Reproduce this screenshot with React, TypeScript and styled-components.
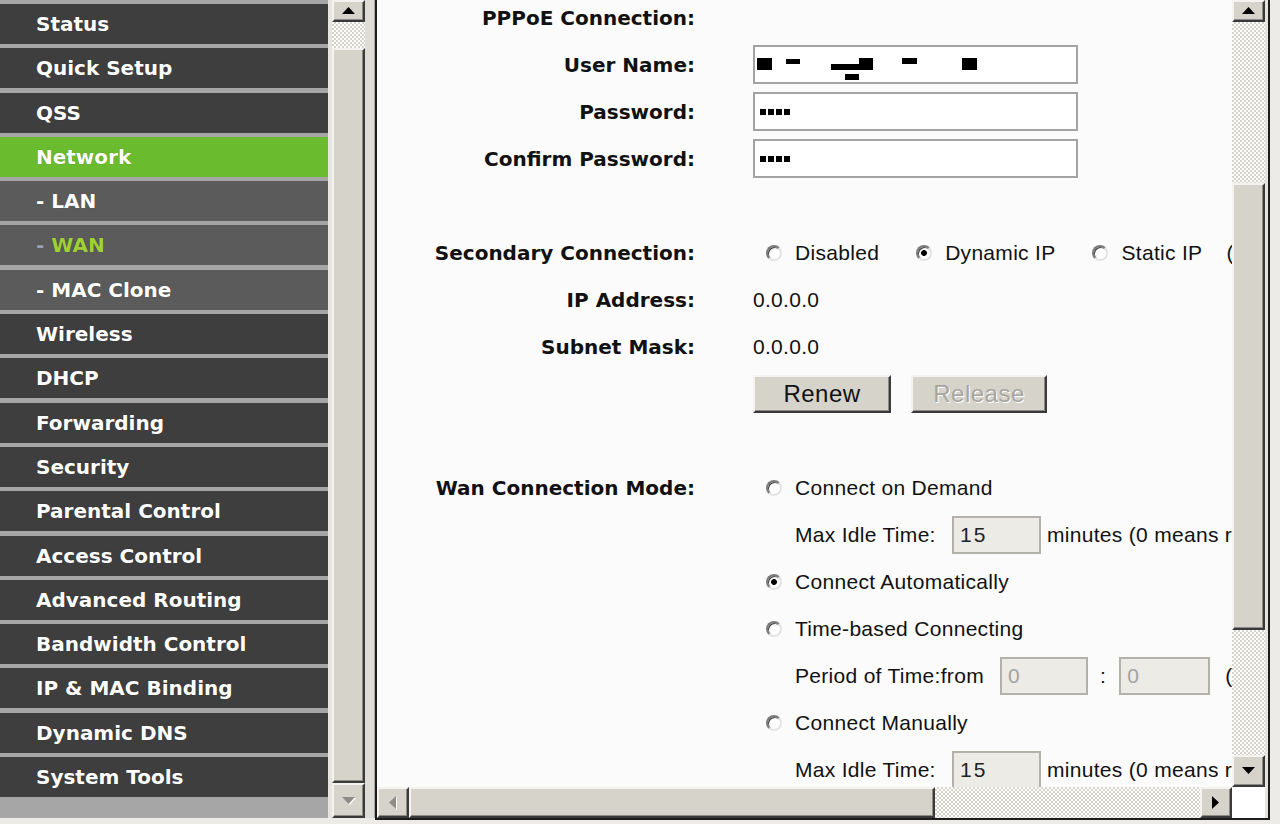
import styled, { createGlobalStyle, css } from 'styled-components';

type MenuKind = 'top' | 'active' | 'sub';

interface IMenuItem {
  label: string;
  kind?: MenuKind;
  current?: boolean;
}

const MENU: IMenuItem[] = [
  { label: 'Status' },
  { label: 'Quick Setup' },
  { label: 'QSS' },
  { label: 'Network', kind: 'active' },
  { label: 'LAN', kind: 'sub' },
  { label: 'WAN', kind: 'sub', current: true },
  { label: 'MAC Clone', kind: 'sub' },
  { label: 'Wireless' },
  { label: 'DHCP' },
  { label: 'Forwarding' },
  { label: 'Security' },
  { label: 'Parental Control' },
  { label: 'Access Control' },
  { label: 'Advanced Routing' },
  { label: 'Bandwidth Control' },
  { label: 'IP & MAC Binding' },
  { label: 'Dynamic DNS' },
  { label: 'System Tools' },
];

// masked characters of the stored user name
const MASK = [
  [2, 11, 15, 12],
  [31, 12, 14, 5],
  [76, 17, 42, 6],
  [104, 11, 14, 12],
  [90, 27, 14, 6],
  [147, 11, 15, 6],
  [207, 11, 15, 12],
];

type Dir = 'up' | 'down' | 'left' | 'right';

function Arrow({ dir, dim }: { dir: Dir; dim?: boolean }) {
  const vertical = dir === 'up' || dir === 'down';
  const points = {
    up: '0,7 6.5,0 13,7',
    down: '0,0 13,0 6.5,7',
    left: '7,0 7,13 0,6.5',
    right: '0,0 0,13 7,6.5',
  }[dir];
  const w = vertical ? 13 : 7;
  const h = vertical ? 7 : 13;
  return (
    <svg width={w + 1} height={h + 1} viewBox={`0 0 ${w + 1} ${h + 1}`}>
      {dim && <polygon points={points} fill="#ffffff" transform="translate(1 1)" />}
      <polygon points={points} fill={dim ? '#8e8c86' : '#000000'} />
    </svg>
  );
}

function Radio({ checked }: { checked?: boolean }) {
  return <RadioDot $checked={checked} />;
}

function Masked() {
  return (
    <>
      <Dot />
      <Dot />
      <Dot />
      <Dot />
    </>
  );
}

export default function App() {
  return (
    <>
      <GlobalStyle />
      <Screen>
        <LeftFrame>
          <Menu>
            {MENU.map((item) => (
              <MenuItem
                key={item.label}
                $kind={item.kind ?? 'top'}
                $current={item.current}
              >
                {item.kind === 'sub' && <Dash $current={item.current}>-&nbsp;</Dash>}
                {item.label}
              </MenuItem>
            ))}
          </Menu>
          <VScroll>
            <ScrollButton $h={22}>
              <Arrow dir="up" />
            </ScrollButton>
            <Track $size={26} />
            <Thumb $size={735} />
            <ScrollButton $h={35}>
              <Arrow dir="down" dim />
            </ScrollButton>
          </VScroll>
        </LeftFrame>
        <FrameGap />
        <MainFrame>
          <Content>
            <Form>
              <Row>
                <Label>PPPoE Connection:</Label>
                <Value />
              </Row>
              <Row>
                <Label>User Name:</Label>
                <Value>
                  <Field>
                    <svg width="321" height="35" viewBox="0 0 321 35">
                      {MASK.map(([x, y, w, h]) => (
                        <rect key={`${x}-${y}`} x={x} y={y} width={w} height={h} fill="#000" />
                      ))}
                    </svg>
                  </Field>
                </Value>
              </Row>
              <Row>
                <Label>Password:</Label>
                <Value>
                  <Field $dots>
                    <Masked />
                  </Field>
                </Value>
              </Row>
              <Row>
                <Label>Confirm Password:</Label>
                <Value>
                  <Field $dots>
                    <Masked />
                  </Field>
                </Value>
              </Row>
              <Row />
              <Row>
                <Label>Secondary Connection:</Label>
                <Value>
                  <Option>
                    <Radio />
                    Disabled
                  </Option>
                  <Option>
                    <Radio checked />
                    Dynamic IP
                  </Option>
                  <Option>
                    <Radio />
                    Static IP
                  </Option>
                  <Note>(For Dual Access/Russia PPPoE)</Note>
                </Value>
              </Row>
              <Row>
                <Label>IP Address:</Label>
                <Value>0.0.0.0</Value>
              </Row>
              <Row>
                <Label>Subnet Mask:</Label>
                <Value>0.0.0.0</Value>
              </Row>
              <Row>
                <Label />
                <Value>
                  <Button type="button">Renew</Button>
                  <Button type="button" disabled>
                    Release
                  </Button>
                </Value>
              </Row>
              <Row />
              <Row>
                <Label>Wan Connection Mode:</Label>
                <Value>
                  <Option>
                    <Radio />
                    Connect on Demand
                  </Option>
                </Value>
              </Row>
              <Row>
                <Label />
                <Value $indent>
                  <SubLabel>Max Idle Time:</SubLabel>
                  <TextBox defaultValue="15" disabled $w={89} />
                  <Unit>minutes (0 means remain active at all times.)</Unit>
                </Value>
              </Row>
              <Row>
                <Label />
                <Value>
                  <Option>
                    <Radio checked />
                    Connect Automatically
                  </Option>
                </Value>
              </Row>
              <Row>
                <Label />
                <Value>
                  <Option>
                    <Radio />
                    Time-based Connecting
                  </Option>
                </Value>
              </Row>
              <Row>
                <Label />
                <Value $indent>
                  <SubLabel $w={205}>Period of Time:from</SubLabel>
                  <TextBox defaultValue="0" disabled $w={88} $dim />
                  <Colon>:</Colon>
                  <TextBox defaultValue="0" disabled $w={91} $dim />
                  <Note>(HH:MM) to</Note>
                </Value>
              </Row>
              <Row>
                <Label />
                <Value>
                  <Option>
                    <Radio />
                    Connect Manually
                  </Option>
                </Value>
              </Row>
              <Row>
                <Label />
                <Value $indent>
                  <SubLabel>Max Idle Time:</SubLabel>
                  <TextBox defaultValue="15" disabled $w={89} />
                  <Unit>minutes (0 means remain active at all times.)</Unit>
                </Value>
              </Row>
            </Form>
          </Content>
          <VScroll>
            <ScrollButton $h={22}>
              <Arrow dir="up" />
            </ScrollButton>
            <Track $size={161} />
            <Thumb $size={447} />
            <Track $size={125} />
            <ScrollButton $h={32}>
              <Arrow dir="down" />
            </ScrollButton>
          </VScroll>
          <HScroll>
            <ScrollButton $w={32}>
              <Arrow dir="left" dim />
            </ScrollButton>
            <Thumb $size={526} />
            <Track $size={265} />
            <ScrollButton $w={32}>
              <Arrow dir="right" />
            </ScrollButton>
          </HScroll>
          <Corner />
        </MainFrame>
      </Screen>
    </>
  );
}

const GlobalStyle = createGlobalStyle`
  html, body {
    margin: 0;
    padding: 0;
    background: #ecebe7;
  }
  #root {
    width: 1280px;
    height: 824px;
    overflow: hidden;
  }
`;

const bevel = css`
  box-sizing: border-box;
  background: #d6d3cb;
  border: 2px solid;
  border-color: #f4f3ef #3a3a3a #3a3a3a #f4f3ef;
  box-shadow: inset -1px -1px 0 #8c8a84;
`;

const Screen = styled.div`
  display: flex;
  align-items: flex-start;
  width: 1280px;
  height: 824px;
  background: #ecebe7;
`;

const LeftFrame = styled.div`
  display: flex;
  height: 818px;
  flex: 0 0 auto;
`;

const Menu = styled.nav`
  width: 332px;
  height: 100%;
  overflow: hidden;
  display: flex;
  flex-direction: column;
  gap: 4.3px;
  padding-top: 4px;
  box-sizing: border-box;
  background: #a6a6a6;
  border-right: 4px solid #e6e5e0;
`;

const MenuItem = styled.div<{ $kind: MenuKind; $current?: boolean }>`
  flex: 0 0 40px;
  display: flex;
  align-items: center;
  padding-left: 36px;
  font-family: 'DejaVu Sans', Verdana, sans-serif;
  font-weight: 700;
  font-size: 20px;
  white-space: nowrap;
  color: ${(p) => (p.$current ? '#9fd134' : '#ffffff')};
  background: ${(p) =>
    p.$kind === 'active' ? '#6bbb2e' : p.$kind === 'sub' ? '#5b5b5b' : '#3e3e3e'};
  text-shadow: 0 0 1px rgba(0, 0, 0, 0.35);
`;

const Dash = styled.span<{ $current?: boolean }>`
  color: ${(p) => (p.$current ? '#9aa0b4' : '#ffffff')};
`;

const VScroll = styled.div`
  width: 33px;
  height: 100%;
  display: flex;
  flex-direction: column;
  box-sizing: border-box;
`;

const HScroll = styled.div`
  display: flex;
  height: 31px;
`;

const ScrollButton = styled.div<{ $w?: number; $h?: number }>`
  ${bevel};
  flex: 0 0 ${(p) => (p.$w ?? p.$h ?? 22)}px;
  display: flex;
  align-items: center;
  justify-content: center;
`;

const Track = styled.div<{ $size: number }>`
  flex: 0 0 ${(p) => p.$size}px;
  background: repeating-conic-gradient(#d6d3cb 0% 25%, #ffffff 0% 50%) 0 0 / 4px 4px;
`;

const Thumb = styled.div<{ $size: number }>`
  ${bevel};
  flex: 0 0 ${(p) => p.$size}px;
`;

const FrameGap = styled.div`
  width: 9px;
  height: 818px;
  flex: 0 0 auto;
  background: #dddcd6;
  border-right: 1px solid #a9a8a2;
`;

const MainFrame = styled.div`
  flex: 0 0 auto;
  display: grid;
  grid-template-columns: 855px 33px;
  grid-template-rows: 787px 31px;
  padding-right: 3px;
  background: #e4e3de;
  border: 2px solid #1c1c1c;
  border-top: 0;
`;

const Content = styled.main`
  background: #fbfbfb;
  overflow: hidden;
`;

const Corner = styled.div`
  background: #ffffff;
`;

const Form = styled.div`
  margin-top: -6px;
  display: flex;
  flex-direction: column;
`;

const Row = styled.div`
  display: grid;
  grid-template-columns: 318px 1fr;
  column-gap: 58px;
  align-items: center;
  height: 47px;
  flex: 0 0 47px;
`;

const Label = styled.div`
  text-align: right;
  white-space: nowrap;
  font-family: 'DejaVu Sans', Verdana, sans-serif;
  font-weight: 700;
  font-size: 20px;
  color: #111111;
`;

const Value = styled.div<{ $indent?: boolean }>`
  display: flex;
  align-items: center;
  white-space: nowrap;
  padding-left: ${(p) => (p.$indent ? '42px' : '0')};
  font-family: 'Liberation Sans', Arial, sans-serif;
  font-size: 21px;
  letter-spacing: 0.3px;
  color: #111111;
`;

const Field = styled.div<{ $dots?: boolean }>`
  box-sizing: border-box;
  width: 325px;
  height: 39px;
  background: #ffffff;
  border: 2px solid #a3a3a3;
  display: flex;
  align-items: center;
  gap: 2px;
  padding-left: ${(p) => (p.$dots ? '5px' : '0')};

  svg {
    display: block;
  }
`;

const Dot = styled.span`
  width: 6px;
  height: 6px;
  background: #000000;
`;

const Option = styled.span`
  display: inline-flex;
  align-items: center;
  margin-right: 24px;
`;

const RadioDot = styled.span<{ $checked?: boolean }>`
  flex: 0 0 16px;
  width: 16px;
  height: 16px;
  margin: 0 13px;
  box-sizing: border-box;
  border-radius: 50%;
  border: 2px solid;
  border-color: #7c7c7c #e4e4e4 #e4e4e4 #7c7c7c;
  box-shadow: inset 1px 1px 0 #404040;
  background: ${(p) =>
    p.$checked ? 'radial-gradient(circle, #000 0 2.6px, #ffffff 3.2px)' : '#ffffff'};
`;

const Note = styled.span``;

const SubLabel = styled.span<{ $w?: number }>`
  width: ${(p) => p.$w ?? 157}px;
  flex: 0 0 auto;
`;

const TextBox = styled.input<{ $w: number; $dim?: boolean }>`
  box-sizing: border-box;
  width: ${(p) => p.$w}px;
  height: 38px;
  margin: 0;
  padding: 0 6px;
  border: 2px solid #b2b1aa;
  background: #ecebe5;
  font-family: 'Liberation Sans', Arial, sans-serif;
  font-size: 21px;
  letter-spacing: 2px;
  outline: none;

  &:disabled {
    color: ${(p) => (p.$dim ? '#a2a2a2' : '#222222')};
    background: #ecebe5;
  }

  & + ${Note} {
    margin-left: 15px;
  }
`;

const Unit = styled.span`
  margin-left: 6px;
`;

const Colon = styled.span`
  margin: 0 13px 0 12px;
`;

const Button = styled.button`
  ${bevel};
  width: 138px;
  height: 38px;
  margin: 0 20px 0 0;
  padding: 0;
  font-family: 'Liberation Sans', Arial, sans-serif;
  font-size: 24px;
  letter-spacing: 0.5px;
  color: #111111;

  &:disabled {
    width: 136px;
    color: #a6a5a0;
    text-shadow: 1px 1px 0 #ffffff;
  }
`;
